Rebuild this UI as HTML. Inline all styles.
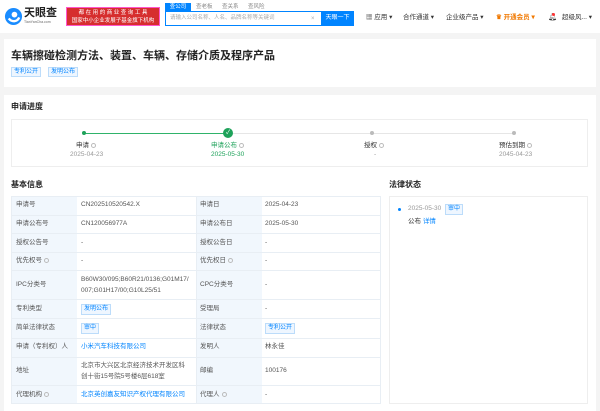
<!DOCTYPE html>
<html><head><meta charset="utf-8"><style>
*{margin:0;padding:0;box-sizing:border-box;line-height:1}
body{width:600px;height:411px;overflow:hidden;background:#f4f4f4;font-family:"Liberation Sans","Noto Sans CJK SC",sans-serif;color:#333;position:relative}
.a{position:absolute;white-space:nowrap}
.hdr{position:absolute;left:0;top:0;width:600px;height:33px;background:#fff}
.card{position:absolute;background:#fff}
.tag{position:absolute;border:1px solid #bcdcfa;background:#eef6ff;color:#0084ff;font-size:6px;line-height:9px;padding:0 2px}
.t{font-size:6.5px;color:#555}
.lb{position:absolute;background:#f1f7fd}
.ln{position:absolute;background:#e8eef4}
.q{display:inline-block;width:5px;height:5px;border:0.6px solid #bbb;border-radius:50%;vertical-align:middle;margin-left:2px}
</style></head><body>
<div class="hdr"></div>
<svg class="a" style="left:4px;top:7px" width="19" height="19" viewBox="0 0 20 20"><circle cx="10" cy="10" r="9" fill="#1a8cff"/><path d="M5 12c3 4 9 4 11-1" stroke="#fff" stroke-width="2.5" fill="none"/><circle cx="11" cy="8" r="3" fill="#fff"/></svg>
<div class="a" style="left:24px;top:8px;font-size:11px;font-weight:bold;color:#222">天眼查</div>
<div class="a" style="left:24px;top:21px;font-size:3.5px;color:#666">TianYanCha.com</div>
<div class="a" style="left:66px;top:7px;width:94px;height:19px;background:#d62e2e;color:#fff;font-size:5.5px;text-align:center;line-height:8px;padding-top:1px;border:1px solid #f5c">都 在 用 的 商 业 查 询 工 具<br>国家中小企业发展子基金旗下机构</div>
<div class="a" style="left:165px;top:3px;width:26px;height:8px;background:#0084ff;color:#fff;font-size:5.5px;line-height:8px;text-align:center">查公司</div>
<div class="a" style="left:196px;top:3px;font-size:5.5px;color:#888;line-height:8px">查老板</div>
<div class="a" style="left:222px;top:3px;font-size:5.5px;color:#888;line-height:8px">查关系</div>
<div class="a" style="left:248px;top:3px;font-size:5.5px;color:#888;line-height:8px">查风险</div>
<div class="a" style="left:165px;top:11px;width:189px;height:15px;border:1px solid #0084ff;background:#fff"></div>
<div class="a" style="left:170px;top:16px;font-size:5.5px;color:#aaa">请输入公司名称、人名、品牌名称等关键词</div>
<div class="a" style="left:311px;top:16px;font-size:6px;color:#aaa">×</div>
<div class="a" style="left:321px;top:11px;width:33px;height:15px;background:#0084ff;color:#fff;font-size:6px;line-height:15px;text-align:center">天眼一下</div>
<div class="a" style="left:366px;top:15px;font-size:6.5px;color:#333">▦ 应用 ▾</div>
<div class="a" style="left:403px;top:15px;font-size:6.5px;color:#333">合作通道 ▾</div>
<div class="a" style="left:446px;top:15px;font-size:6.5px;color:#333">企业级产品 ▾</div>
<div class="a" style="left:496px;top:15px;font-size:6.5px;color:#f07800;font-weight:bold">♛ 开通会员 ▾</div>
<div class="a" style="left:548px;top:14px;font-size:7px;color:#333">🔔︎</div>
<div class="a" style="left:552px;top:13px;width:3px;height:3px;background:#f33;border-radius:50%"></div>
<div class="a" style="left:562px;top:15px;font-size:6.5px;color:#333">超级风... ▾</div>
<div class="card" style="left:4px;top:39px;width:592px;height:48px"></div>
<div class="a" style="left:11px;top:51px;font-size:11px;font-weight:bold;color:#222">车辆擦碰检测方法、装置、车辆、存储介质及程序产品</div>
<div class="tag" style="left:11px;top:67px;height:10px">专利公开</div>
<div class="tag" style="left:48px;top:67px;height:10px">发明公布</div>
<div class="card" style="left:4px;top:95px;width:592px;height:316px"></div>
<div class="a" style="left:11px;top:103px;font-size:8px;font-weight:bold;color:#222">申请进度</div>
<div class="a" style="left:11px;top:119px;width:577px;height:48px;border:1px solid #eee"></div>
<div class="a" style="left:84px;top:132.5px;width:144px;height:1px;background:#2fb36a"></div>
<div class="a" style="left:228px;top:132.5px;width:286px;height:1px;background:#e6e6e6"></div>
<div class="a" style="left:82px;top:131px;width:4px;height:4px;border-radius:50%;background:#1ea25a"></div>
<div class="a" style="left:223px;top:128px;width:10px;height:10px;border-radius:50%;background:#1ea25a;color:#fff;font-size:6px;line-height:10px;text-align:center">✓</div>
<div class="a" style="left:370px;top:131px;width:4px;height:4px;border-radius:50%;background:#bbb"></div>
<div class="a" style="left:512px;top:131px;width:4px;height:4px;border-radius:50%;background:#bbb"></div>
<div class="a t" style="left:76px;top:143px;color:#333">申请<span class="q"></span></div>
<div class="a t" style="left:70px;top:152px;color:#999">2025-04-23</div>
<div class="a t" style="left:211px;top:143px;color:#1ea25a">申请公布<span class="q"></span></div>
<div class="a t" style="left:211px;top:152px;color:#1ea25a">2025-05-30</div>
<div class="a t" style="left:364px;top:143px;color:#333">授权<span class="q"></span></div>
<div class="a t" style="left:374px;top:152px;color:#999">-</div>
<div class="a t" style="left:499px;top:143px;color:#333">预估到期<span class="q"></span></div>
<div class="a t" style="left:499px;top:152px;color:#999">2045-04-23</div>
<div class="a" style="left:11px;top:181px;font-size:8px;font-weight:bold;color:#222">基本信息</div>
<div class="a" style="left:389px;top:181px;font-size:8px;font-weight:bold;color:#222">法律状态</div>
<div class="a" style="left:11px;top:196px;width:370px;height:208px;border:1px solid #e8eef4"></div>
<div class="lb" style="left:12px;top:197px;width:65px;height:206px"></div>
<div class="lb" style="left:196px;top:197px;width:66px;height:206px"></div>
<div class="ln" style="left:196px;top:197px;width:1px;height:206px"></div>
<div class="ln" style="left:11px;top:215px;width:370px;height:1px"></div>
<div class="ln" style="left:11px;top:233px;width:370px;height:1px"></div>
<div class="ln" style="left:11px;top:252px;width:370px;height:1px"></div>
<div class="ln" style="left:11px;top:270px;width:370px;height:1px"></div>
<div class="ln" style="left:11px;top:299px;width:370px;height:1px"></div>
<div class="ln" style="left:11px;top:318px;width:370px;height:1px"></div>
<div class="ln" style="left:11px;top:338px;width:370px;height:1px"></div>
<div class="ln" style="left:11px;top:357px;width:370px;height:1px"></div>
<div class="ln" style="left:11px;top:385px;width:370px;height:1px"></div>
<div class="a t" style="left:16px;top:202px">申请号</div><div class="a t" style="left:81px;top:202px">CN202510520542.X</div><div class="a t" style="left:200px;top:202px">申请日</div><div class="a t" style="left:265px;top:202px">2025-04-23</div>
<div class="a t" style="left:16px;top:221px">申请公布号</div><div class="a t" style="left:81px;top:221px">CN120056977A</div><div class="a t" style="left:200px;top:221px">申请公布日</div><div class="a t" style="left:265px;top:221px">2025-05-30</div>
<div class="a t" style="left:16px;top:240px">授权公告号</div><div class="a t" style="left:81px;top:240px">-</div><div class="a t" style="left:200px;top:240px">授权公告日</div><div class="a t" style="left:265px;top:240px">-</div>
<div class="a t" style="left:16px;top:258px">优先权号<span class="q"></span></div><div class="a t" style="left:81px;top:258px">-</div><div class="a t" style="left:200px;top:258px">优先权日<span class="q"></span></div><div class="a t" style="left:265px;top:258px">-</div>
<div class="a t" style="left:16px;top:282px">IPC分类号</div><div class="a t" style="left:81px;top:274px;line-height:11px">B60W30/095;B60R21/0136;G01M17/<br>007;G01H17/00;G10L25/51</div><div class="a t" style="left:200px;top:282px">CPC分类号</div><div class="a t" style="left:265px;top:282px">-</div>
<div class="a t" style="left:16px;top:306px">专利类型</div><div class="tag" style="left:81px;top:304px">发明公布</div><div class="a t" style="left:200px;top:306px">受理局</div><div class="a t" style="left:265px;top:306px">-</div>
<div class="a t" style="left:16px;top:325px">简单法律状态</div><div class="tag" style="left:81px;top:323px">审中</div><div class="a t" style="left:200px;top:325px">法律状态</div><div class="tag" style="left:265px;top:323px">专利公开</div>
<div class="a t" style="left:16px;top:344px">申请（专利权）人</div><div class="a t" style="left:81px;top:344px;color:#0084ff">小米汽车科技有限公司</div><div class="a t" style="left:200px;top:344px">发明人</div><div class="a t" style="left:265px;top:344px">林永佳</div>
<div class="a t" style="left:16px;top:368px">地址</div><div class="a t" style="left:81px;top:360px;line-height:11px">北京市大兴区北京经济技术开发区科<br>创十街15号院5号楼6层618室</div><div class="a t" style="left:200px;top:368px">邮编</div><div class="a t" style="left:265px;top:368px">100176</div>
<div class="a t" style="left:16px;top:392px">代理机构<span class="q"></span></div><div class="a t" style="left:81px;top:392px;color:#0084ff">北京英创嘉友知识产权代理有限公司</div><div class="a t" style="left:200px;top:392px">代理人<span class="q"></span></div><div class="a t" style="left:265px;top:392px">-</div>
<div class="a" style="left:389px;top:196px;width:199px;height:208px;border:1px solid #eee"></div>
<div class="a" style="left:398px;top:208px;width:3px;height:3px;border-radius:50%;background:#0084ff"></div>
<div class="a t" style="left:408px;top:206px;color:#999">2025-05-30</div>
<div class="tag" style="left:445px;top:204px">审中</div>
<div class="a t" style="left:408px;top:219px;color:#333">公布 <span style="color:#0084ff">详情</span></div>
</body></html>
